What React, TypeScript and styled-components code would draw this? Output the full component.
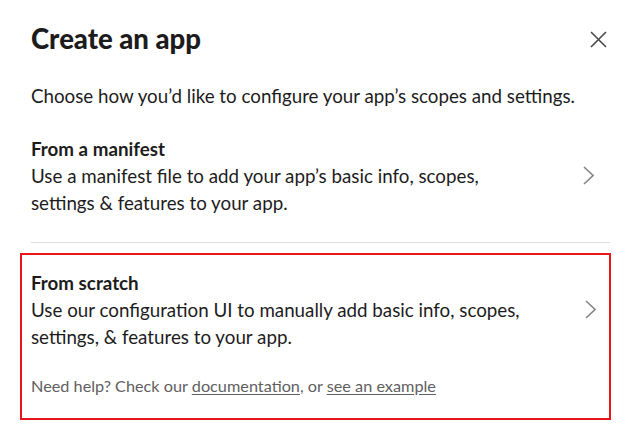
import React from 'react'
import styled, { createGlobalStyle } from 'styled-components'

const GlobalStyle = createGlobalStyle`
  html, body {
    margin: 0;
    padding: 0;
    background: #fff;
  }
  body {
    font-family: Lato, 'Noto Sans', sans-serif;
    color: #1d1c1d;
    -webkit-font-smoothing: antialiased;
  }
`

const Modal = styled.div`
  width: 638px;
  height: 431px;
  box-sizing: border-box;
  padding: 21px 28px 0 31px;
  background: #fff;
  overflow: hidden;
`

const Header = styled.div`
  display: flex;
  justify-content: space-between;
  align-items: center;
`

const Title = styled.h1`
  margin: 0;
  font-size: 27.5px;
  line-height: 36px;
  font-weight: 900;
  color: #1d1c1d;
`

const CloseButton = styled.button`
  border: none;
  background: none;
  padding: 0;
  margin-right: 3px;
  width: 18px;
  height: 18px;
  display: flex;
  align-items: center;
  justify-content: center;
  color: #4a4a4a;
  cursor: pointer;
`

const Intro = styled.p`
  margin: 25px 0 26px;
  font-size: 18.75px;
  line-height: 27px;
`

const Option = styled.div<{ $highlighted?: boolean }>`
  display: flex;
  flex-direction: column;
  cursor: pointer;
  ${({ $highlighted }) =>
    $highlighted
      ? `
    border: 2px solid #e8161c;
    margin: 10px -1px 0 -11px;
    padding: 14px 13px 20px 9px;
  `
      : `
    border-bottom: 1px solid #dddddd;
    padding: 0 16px 26px 0;
  `}
`

const OptionRow = styled.div`
  display: flex;
  align-items: center;
  justify-content: space-between;
`

const OptionText = styled.div`
  width: 500px;
`

const OptionTitle = styled.div`
  font-size: 18.75px;
  line-height: 27px;
  font-weight: 700;
`

const OptionDesc = styled.div`
  font-size: 18.75px;
  line-height: 27px;
  font-weight: 400;
`

const Chevron = styled.span`
  display: flex;
  color: #868686;
`

const Help = styled.div`
  margin-top: 24px;
  font-size: 16.25px;
  line-height: 24px;
  color: #616061;
`

const HelpLink = styled.a`
  color: #616061;
  text-decoration: underline;
  text-underline-offset: 2px;
`

const CloseIcon = () => (
  <svg width="17" height="17" viewBox="0 0 17 17" fill="none">
    <path d="M1 1L16 16M16 1L1 16" stroke="currentColor" strokeWidth="1.6" />
  </svg>
)

const ChevronIcon = () => (
  <svg width="11" height="19" viewBox="0 0 11 19" fill="none">
    <path d="M1 1L10 9.5L1 18" stroke="currentColor" strokeWidth="1.6" />
  </svg>
)

export default function App() {
  return (
    <>
      <GlobalStyle />
      <Modal>
        <Header>
          <Title>Create an app</Title>
          <CloseButton aria-label="Close">
            <CloseIcon />
          </CloseButton>
        </Header>
        <Intro>Choose how you’d like to configure your app’s scopes and settings.</Intro>

        <Option>
          <OptionRow>
            <OptionText>
              <OptionTitle>From a manifest</OptionTitle>
              <OptionDesc>
                Use a manifest file to add your app’s basic info, scopes, settings &amp; features to your app.
              </OptionDesc>
            </OptionText>
            <Chevron>
              <ChevronIcon />
            </Chevron>
          </OptionRow>
        </Option>

        <Option $highlighted>
          <OptionRow>
            <OptionText>
              <OptionTitle>From scratch</OptionTitle>
              <OptionDesc>
                Use our configuration UI to manually add basic info, scopes, settings, &amp; features to your app.
              </OptionDesc>
            </OptionText>
            <Chevron>
              <ChevronIcon />
            </Chevron>
          </OptionRow>
          <Help>
            Need help? Check our <HelpLink href="#">documentation</HelpLink>, or{' '}
            <HelpLink href="#">see an example</HelpLink>
          </Help>
        </Option>
      </Modal>
    </>
  )
}
